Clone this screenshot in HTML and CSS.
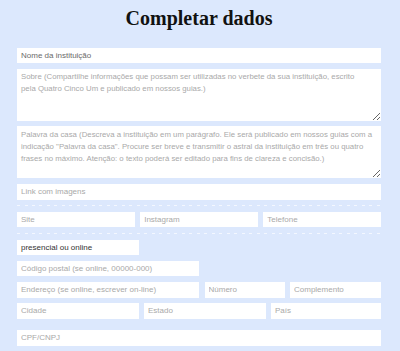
FILE: index.html
```html
<!DOCTYPE html>
<html lang="pt-BR">
<head>
    <meta charset="UTF-8">
    <title>Completar dados</title>
    <link rel="stylesheet" href="styles.css">
</head>
<body>
<div class="page">
    <h1 class="title">Completar dados</h1>
    <form class="form">
        <input class="field filled" type="text" placeholder="Nome da instituição">
        <textarea class="field area" placeholder="Sobre (Compartilhe informações que possam ser utilizadas no verbete da sua instituição, escrito&#10;pela Quatro Cinco Um e publicado em nossos guias.)"></textarea>
        <textarea class="field area" placeholder="Palavra da casa (Descreva a instituição em um parágrafo. Ele será publicado em nossos guias com a&#10;indicação &quot;Palavra da casa&quot;. Procure ser breve e transmitir o astral da instituição em três ou quatro&#10;frases no máximo. Atenção: o texto poderá ser editado para fins de clareza e concisão.)"></textarea>
        <input class="field" type="text" placeholder="Link com imagens">

        <hr class="sep">

        <div class="row three">
            <input class="field" type="text" placeholder="Site">
            <input class="field" type="text" placeholder="Instagram">
            <input class="field" type="text" placeholder="Telefone">
        </div>

        <hr class="sep">

        <div class="row">
            <div class="field select">presencial ou online</div>
        </div>
        <div class="row half">
            <input class="field" type="text" placeholder="Código postal (se online, 00000-000)">
        </div>
        <div class="row address">
            <input class="field" type="text" placeholder="Endereço (se online, escrever on-line)">
            <input class="field" type="text" placeholder="Número">
            <input class="field" type="text" placeholder="Complemento">
        </div>
        <div class="row city">
            <input class="field" type="text" placeholder="Cidade">
            <input class="field" type="text" placeholder="Estado">
            <input class="field" type="text" placeholder="País">
        </div>

        <input class="field doc" type="text" placeholder="CPF/CNPJ">
    </form>
</div>
</body>
</html>
```

FILE: styles.css
```css
*{
    margin: 0;
    padding: 0;
    box-sizing: border-box;
}
html,body{
    background: #dce8fd;
}
body{
    font-family: "Liberation Sans", Arial, sans-serif;
    color: #333;
}
.page{
    width: 364px;
    margin-left: 17px;
    padding-top: 6px;
}
.title{
    font-family: "Liberation Serif", "Times New Roman", serif;
    font-weight: bold;
    font-size: 20px;
    line-height: 24px;
    text-align: center;
    color: #111;
    height: 41.7px;
}
.form{
    display: flex;
    flex-direction: column;
    gap: 5.6px;
}
.field{
    display: block;
    width: 100%;
    height: 15.6px;
    border: none;
    outline: none;
    background: #fff;
    padding: 0 4px;
    font-family: "Liberation Sans", Arial, sans-serif;
    font-size: 8px;
    color: #333;
}
.field::placeholder{
    color: #a9a9a9;
}
.field.filled::placeholder{
    color: #6a6a6a;
}
.area{
    height: 52px;
    font-size: 7.8px;
    line-height: 12px;
    padding: 2.5px 1px 2.5px 4px;
    resize: vertical;
    overflow: hidden;
}
.sep{
    border: none;
    height: 1px;
    background: repeating-linear-gradient(to right, #f3f7ff 0 3px, transparent 3px 7.5px);
}
.row{
    display: grid;
    gap: 5.5px;
    grid-template-columns: 121.7px;
}
.row.three{
    grid-template-columns: 1fr 1fr 1fr;
}
.row.half{
    grid-template-columns: 182px;
}
.row.address{
    grid-template-columns: 182px 80px 1fr;
}
.row.city{
    grid-template-columns: 121.5px 121.5px 1fr;
}
.select{
    line-height: 15.6px;
    color: #333;
}
.doc{
    margin-top: 5.6px;
}
```
